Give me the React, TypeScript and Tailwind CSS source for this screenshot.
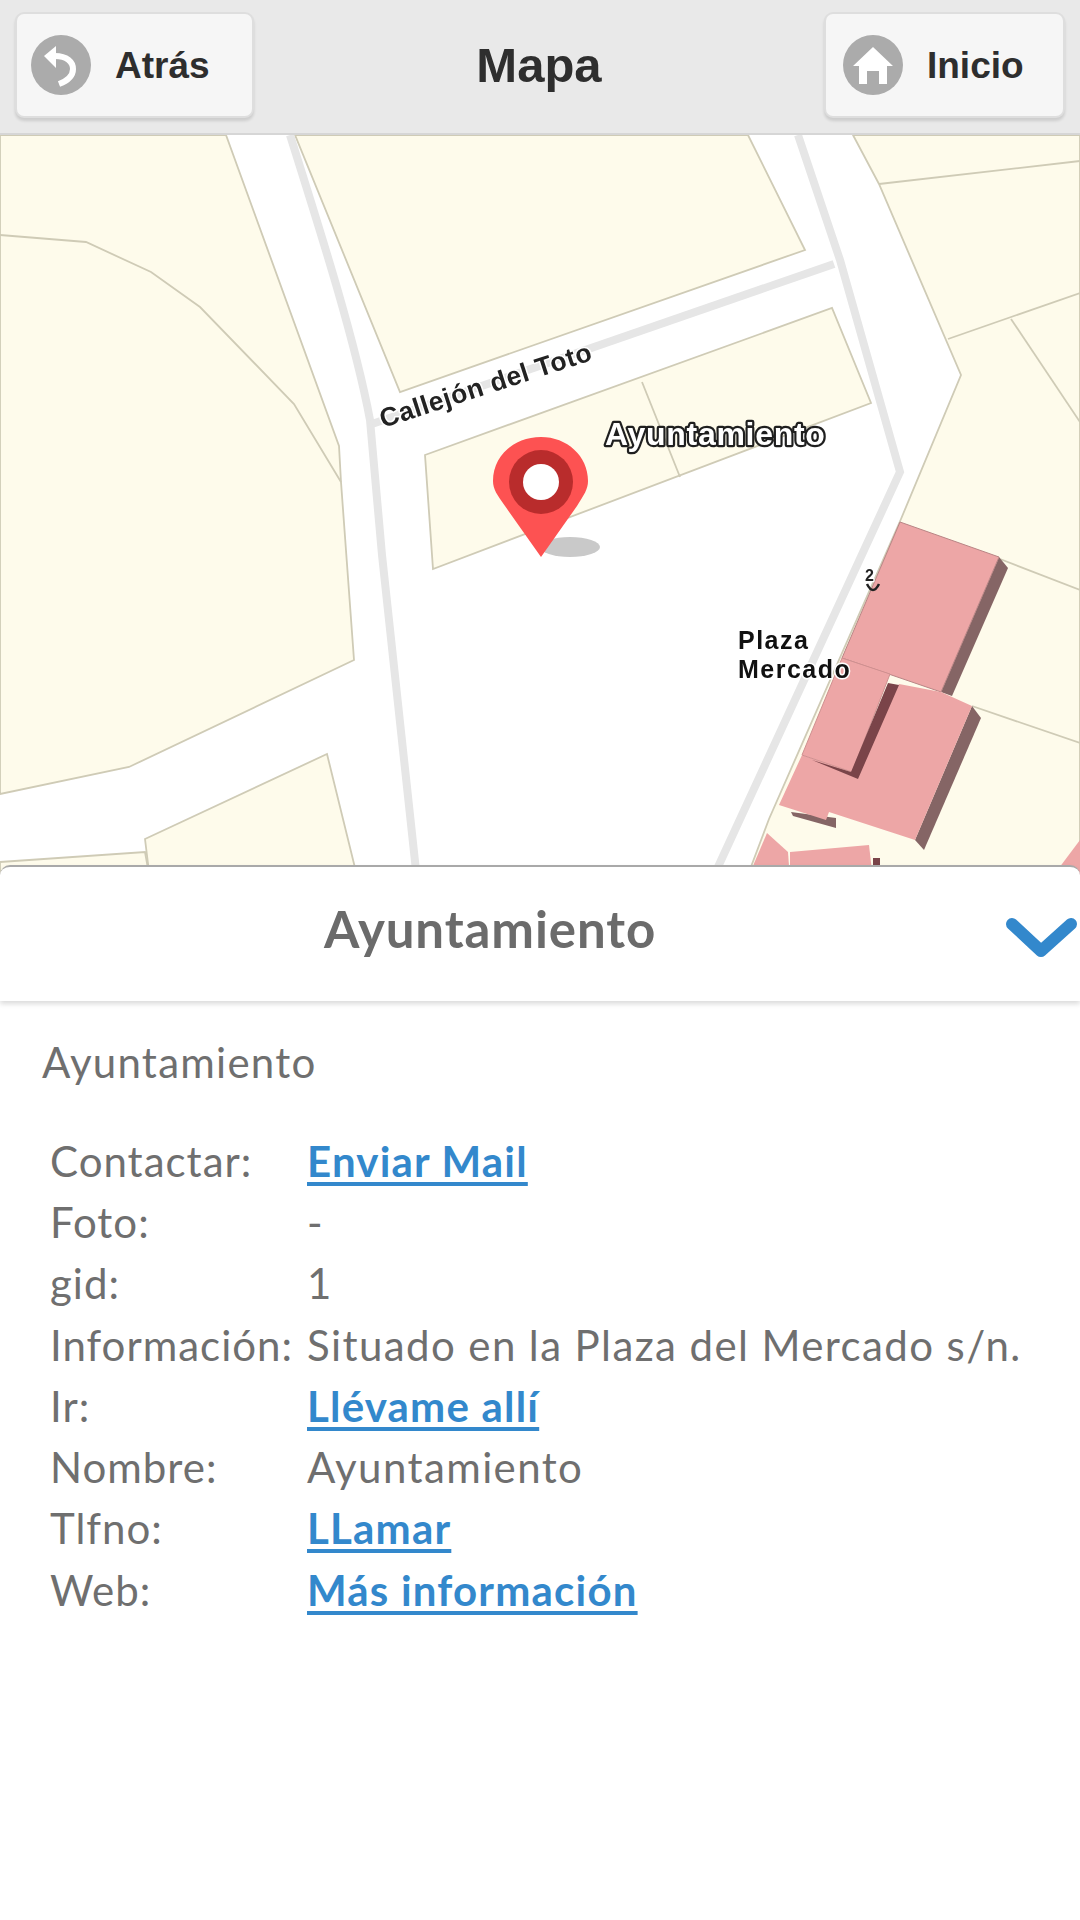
const rows: [string, string, boolean][] = [
  ["Contactar:", "Enviar Mail", true],
  ["Foto:", "-", false],
  ["gid:", "1", false],
  ["Información:", "Situado en la Plaza del Mercado s/n.", false],
  ["Ir:", "Llévame allí", true],
  ["Nombre:", "Ayuntamiento", false],
  ["Tlfno:", "LLamar", true],
  ["Web:", "Más información", true],
];

function HeaderButton({ label, className, children }: { label: string; className: string; children: React.ReactNode }) {
  return (
    <div className={`flex h-[106px] items-center rounded-[9px] border-2 border-[#dedede] bg-[#f6f6f6] shadow-[0_3px_3px_rgba(0,0,0,0.12)] ${className}`}>
      <svg viewBox="0 0 60 60" className="h-[60px] w-[60px] shrink-0">
        <circle cx="30" cy="30" r="30" fill="#ababab" />
        {children}
      </svg>
      <span className="ml-[24px] font-['Liberation_Sans',sans-serif] text-[37px] leading-none font-bold text-[#2e2e2e]">{label}</span>
    </div>
  );
}

function MapView() {
  const cream = "#fefbeb";
  const edge = "#cfcbb6";
  const pink = "#eda6a6";
  const blocks = [
    "M0 135 L226 135 L339 446 L341 482 L354 660 L129 767 L0 794 Z",
    "M295 135 L748 135 L805 250 L400 392 Z",
    "M425 455 L832 308 L871 403 L433 569 Z",
    "M145 839 L327 754 L358 880 L150 880 Z",
    "M0 862 L145 852 L150 880 L0 880 Z",
    "M853 135 L879 184 L961 375 L901 519 L769 819 L746 880 L1080 880 L1080 135 Z",
  ];
  const lines = [
    "M0 235 L86 242 L151 272 L200 307 L294 404 L341 482",
    "M642 382 L680 477",
    "M879 184 L1080 161",
    "M948 339 L1080 293",
    "M1011 319 L1080 422",
    "M1000 559 L1080 590",
    "M972 706 L1080 743",
  ];
  return (
    <svg viewBox="0 135 1080 745" className="block h-[745px] w-[1080px] blur-[0.6px]">
      <rect x="0" y="135" width="1080" height="745" fill="#ffffff" />
      {blocks.map((d) => (
        <path key={d} d={d} fill={cream} stroke={edge} strokeWidth="1.8" />
      ))}
      {lines.map((d) => (
        <path key={d} d={d} fill="none" stroke={edge} strokeWidth="1.8" />
      ))}
      <g fill="none" stroke="#e6e6e6" strokeWidth="8">
        <path d="M290 135 C 320 230 355 340 370 420 L382 555 L417 880" />
        <path d="M372 424 L834 264" />
        <path d="M798 135 L840 260 L900 472 L712 880" />
      </g>
      <path d="M999 557 L1008 568 L952 696 L941 692 Z" fill="#856565" />
      <path d="M972 706 L981 718 L924 850 L915 840 Z" fill="#856565" />
      <path d="M791 812 L836 818 L836 828 L793 816 Z" fill="#856565" />
      <path d="M900 522 L999 557 L941 692 L842 658 Z" fill={pink} stroke="#b98585" strokeWidth="1" />
      <path d="M899 684 L941 692 L972 706 L915 840 L829 812 L826 820 L779 805 L802 755 L851 772 Z" fill={pink} />
      <path d="M842 658 L890 674 L852 772 L802 755 Z" fill={pink} stroke="#cf9090" strokeWidth="1" />
      <path d="M888 683 L899 685 L858 779 L812 760 L851 772 Z" fill="#7a4449" />
      <path d="M747 880 L767 833 L788 852 L790 880 Z" fill={pink} />
      <path d="M790 852 L869 845 L873 880 L790 880 Z" fill={pink} />
      <path d="M873 858 L880 858 L880 880 L873 880 Z" fill="#7a4449" />
      <path d="M1050 880 L1080 840 L1080 880 Z" fill={pink} />
      <g fontFamily="'Liberation Sans', sans-serif" fontWeight="700" strokeLinejoin="round">
        <text x="383" y="428" transform="rotate(-18 383 428)" fontSize="26.5" letterSpacing="0.6" fill="#222222" stroke="#ffffff" strokeWidth="3" paintOrder="stroke">Callejón del Toto</text>
        <text x="605" y="445" fontSize="32" letterSpacing="0.7" fill="#ffffff" stroke="#1f1f1f" strokeWidth="4.5" paintOrder="stroke">Ayuntamiento</text>
        <text x="738" y="649" fontSize="25" letterSpacing="1.5" fill="#111111" stroke="#ffffff" strokeWidth="3" paintOrder="stroke">Plaza</text>
        <text x="738" y="678" fontSize="25" letterSpacing="1.5" fill="#111111" stroke="#ffffff" strokeWidth="3" paintOrder="stroke">Mercado</text>
        <text x="865" y="581" fontSize="16" fill="#222222" stroke="#ffffff" strokeWidth="2.5" paintOrder="stroke">2</text>
        <path d="M867 584 Q 873 596 879 584" fill="none" stroke="#222222" strokeWidth="2.5" />
      </g>
      <ellipse cx="570" cy="547" rx="30" ry="10" fill="#c9c9c9" />
      <path d="M541 557 L505 506 C 497 495 493 489 493 481 C 493 456 514 437 541 437 C 567 437 588 456 588 481 C 588 489 584 495 577 506 Z" fill="#fd5252" />
      <circle cx="541" cy="482" r="32" fill="#b92c2c" />
      <circle cx="541" cy="482" r="18" fill="#ffffff" />
    </svg>
  );
}

export default function App() {
  return (
    <div className="flex h-[1920px] w-[1080px] flex-col overflow-hidden bg-white">
      <header className="flex h-[135px] shrink-0 items-center justify-between border-b-2 border-[#d6d6d6] bg-[#e9e9e9] px-[15px] pb-[3px]">
        <HeaderButton label="Atrás" className="w-[239px] pl-[14px]">
          <path d="M25 11 L13 21 L25 33 Z" fill="#ffffff" />
          <path d="M24 21 C 36 21 42 27 42 34 C 42 41 36 46 28 49" fill="none" stroke="#ffffff" strokeWidth="6" />
        </HeaderButton>
        <h1 className="font-['Liberation_Sans',sans-serif] text-[49px] leading-none font-bold text-[#2e2e2e]">Mapa</h1>
        <HeaderButton label="Inicio" className="w-[241px] pl-[17px]">
          <path d="M30 12 L50 31 L44 31 L44 49 L36 49 L36 36 L24 36 L24 49 L16 49 L16 31 L10 31 Z" fill="#ffffff" />
        </HeaderButton>
      </header>

      <MapView />

      <section className="relative -mt-[15px] flex h-[136px] shrink-0 items-center rounded-t-[10px] border-t-2 border-[#a9a9a9] bg-white pb-[12px] shadow-[0_3px_5px_rgba(0,0,0,0.14)]">
        <h2 className="w-[980px] text-center font-['Lato',sans-serif] text-[51px] leading-none font-bold tracking-[0.9px] text-[#6b6b6b]">Ayuntamiento</h2>
        <svg viewBox="0 0 74 42" className="absolute top-[50px] right-[1px] h-[42px] w-[74px]">
          <path d="M7 7 L36 34 L66 7" fill="none" stroke="#3388cc" strokeWidth="12" strokeLinecap="round" strokeLinejoin="round" />
        </svg>
      </section>

      <main className="font-['Lato',sans-serif] text-[42px] leading-none text-[#6f6f6f]">
        <p className="mt-[40px] pl-[42px] tracking-[1.25px]">Ayuntamiento</p>
        <div className="mt-[47px] grid grid-cols-[257px_1fr] auto-rows-[61.3px] items-center pl-[50px] tracking-[1.4px]">
          {rows.map(([label, value, link]) => (
            <div key={label} className="contents">
              <span className="tracking-[1px]">{label}</span>
              {link ? (
                <a href="#" className="font-bold tracking-[1.2px] text-[#3388cc] underline underline-offset-[5px]">{value}</a>
              ) : (
                <span>{value}</span>
              )}
            </div>
          ))}
        </div>
      </main>
    </div>
  );
}
